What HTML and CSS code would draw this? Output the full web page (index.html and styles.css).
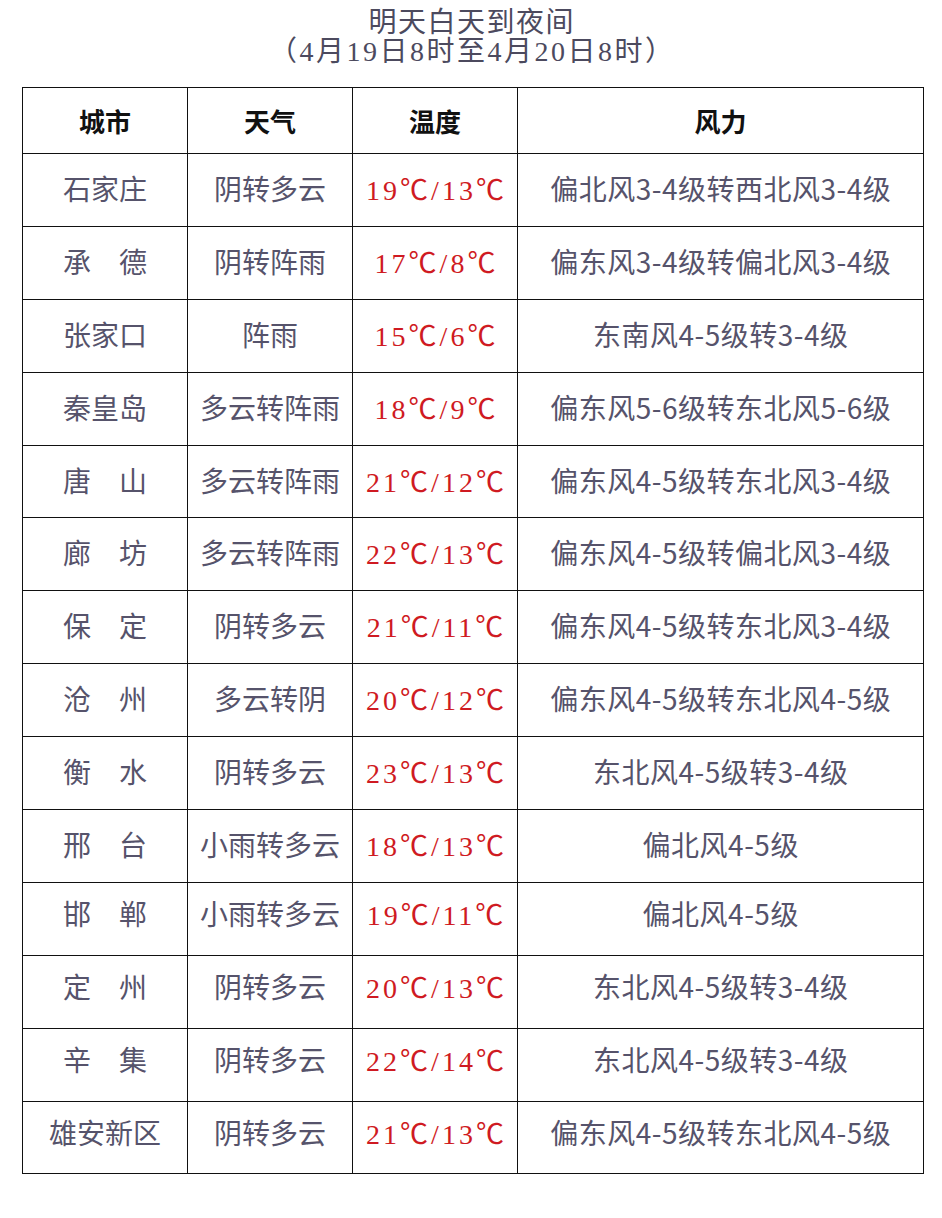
FILE: index.html
```html
<!DOCTYPE html>
<html lang="zh">
<head>
<meta charset="utf-8">
<link rel="stylesheet" href="styles.css">
</head>
<body>
<div class="title">
  <div class="main">明天白天到夜间</div>
  <div class="sub">（4月19日8时至4月20日8时）</div>
</div>
<table class="wx">
  <colgroup><col class="c1"><col class="c2"><col class="c3"><col class="c4"></colgroup>
  <thead>
    <tr><th>城市</th><th>天气</th><th>温度</th><th>风力</th></tr>
  </thead>
  <tbody>
    <tr><td>石家庄</td><td>阴转多云</td><td class="t">19℃/13℃</td><td class="w">偏北风3-4级转西北风3-4级</td></tr>
    <tr><td>承　德</td><td>阴转阵雨</td><td class="t">17℃/8℃</td><td class="w">偏东风3-4级转偏北风3-4级</td></tr>
    <tr><td>张家口</td><td>阵雨</td><td class="t">15℃/6℃</td><td class="w">东南风4-5级转3-4级</td></tr>
    <tr><td>秦皇岛</td><td>多云转阵雨</td><td class="t">18℃/9℃</td><td class="w">偏东风5-6级转东北风5-6级</td></tr>
    <tr><td>唐　山</td><td>多云转阵雨</td><td class="t">21℃/12℃</td><td class="w">偏东风4-5级转东北风3-4级</td></tr>
    <tr><td>廊　坊</td><td>多云转阵雨</td><td class="t">22℃/13℃</td><td class="w">偏东风4-5级转偏北风3-4级</td></tr>
    <tr><td>保　定</td><td>阴转多云</td><td class="t">21℃/11℃</td><td class="w">偏东风4-5级转东北风3-4级</td></tr>
    <tr><td>沧　州</td><td>多云转阴</td><td class="t">20℃/12℃</td><td class="w">偏东风4-5级转东北风4-5级</td></tr>
    <tr><td>衡　水</td><td>阴转多云</td><td class="t">23℃/13℃</td><td class="w">东北风4-5级转3-4级</td></tr>
    <tr><td>邢　台</td><td>小雨转多云</td><td class="t">18℃/13℃</td><td class="w">偏北风4-5级</td></tr>
    <tr><td>邯　郸</td><td>小雨转多云</td><td class="t">19℃/11℃</td><td class="w">偏北风4-5级</td></tr>
    <tr><td>定　州</td><td>阴转多云</td><td class="t">20℃/13℃</td><td class="w">东北风4-5级转3-4级</td></tr>
    <tr><td>辛　集</td><td>阴转多云</td><td class="t">22℃/14℃</td><td class="w">东北风4-5级转3-4级</td></tr>
    <tr><td>雄安新区</td><td>阴转多云</td><td class="t">21℃/13℃</td><td class="w">偏东风4-5级转东北风4-5级</td></tr>
  </tbody>
</table>
</body>
</html>
```

FILE: styles.css
```css
html, body {
  margin: 0;
  padding: 0;
  background: #ffffff;
}
body {
  font-family: "Liberation Serif", "Noto Sans CJK SC", serif;
  color: #56536b;
}
.title {
  padding-top: 8px;
  height: 79px;
  text-align: center;
  font-family: "Liberation Serif", "Noto Sans CJK SC", serif;
  font-size: 28px;
  line-height: 29px;
  color: #4c4a5e;
}
.title .main {
  letter-spacing: 1.5px;
  padding-left: 1.5px;
}
.title .sub {
  letter-spacing: 2.5px;
  padding-left: 2.5px;
}
.wx {
  margin: 0 0 0 22px;
  width: 901px;
  border-collapse: collapse;
  table-layout: fixed;
}
.c1, .c2, .c3 { width: 165px; }
.c4 { width: 406px; }
.wx th, .wx td {
  border: 1.5px solid #111;
  text-align: center;
  padding: 0;
  font-size: 28px;
  font-weight: 400;
}
.wx th {
  height: 65px;
  font-size: 26px;
  color: #111;
  font-weight: 700;
}
.wx td {
  height: 67.9px;
  padding-bottom: 4px;
}
.wx tbody tr:nth-child(n+11) td {
  height: 59.9px;
  padding-bottom: 12px;
}
.wx td.t {
  color: #cf1a22;
  letter-spacing: 3px;
  padding-left: 3px;
}
.wx td.w {
  font-family: "Noto Sans CJK SC", sans-serif;
  font-size: 28px;
  letter-spacing: 0.5px;
  padding-left: 0.5px;
}
```
